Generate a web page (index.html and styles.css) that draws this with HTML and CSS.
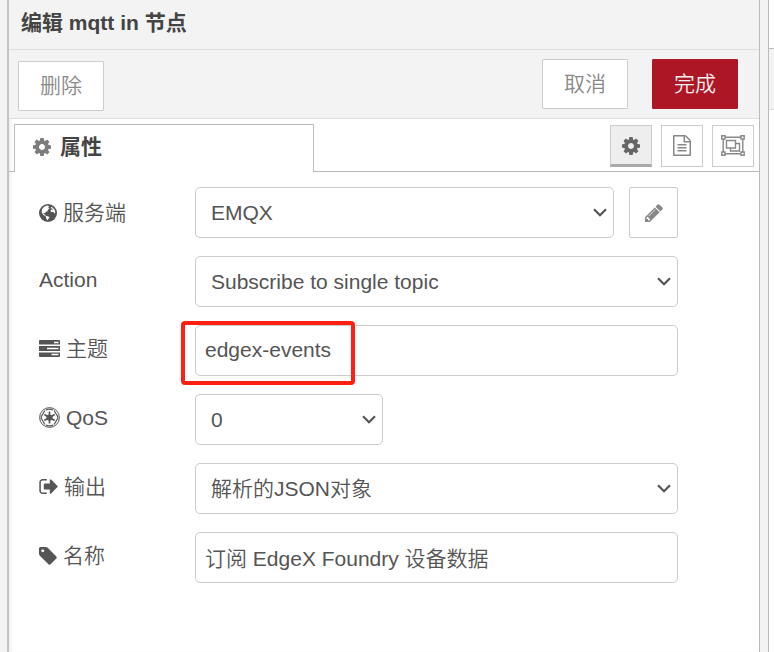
FILE: index.html
```html
<!DOCTYPE html>
<html lang="zh-CN">
<head>
<meta charset="utf-8">
<title>编辑 mqtt in 节点</title>
<link rel="stylesheet" href="styles.css">
</head>
<body>
<svg width="0" height="0" class="defs">
  <symbol id="cog" viewBox="128 128 1536 1536"><path d="M1152 896q0-106-75-181t-181-75-181 75-75 181 75 181 181 75 181-75 75-181zm512-109v222q0 12-8 23t-20 13l-185 28q-19 54-39 91 35 50 107 138 10 12 10 25t-9 23q-27 37-99 108t-94 71q-12 0-26-9l-138-108q-44 23-91 38-16 136-29 186-7 28-36 28h-222q-14 0-24.5-8.5t-11.5-21.5l-28-184q-49-16-90-37l-141 107q-10 9-25 9-14 0-25-11-126-114-165-168-7-10-7-23 0-12 8-23 15-21 51-66.5t54-70.5q-27-50-41-99l-183-27q-13-2-21-12.5t-8-23.5v-222q0-12 8-23t19-13l186-28q14-46 39-92-40-57-107-138-10-12-10-24 0-10 9-23 26-36 98.5-107.5t94.5-71.5q13 0 26 10l138 107q44-23 91-38 16-136 29-186 7-28 36-28h222q14 0 24.5 8.5t11.5 21.5l28 184q49 16 90 37l142-107q9-9 24-9 13 0 25 10 129 119 165 170 7 8 7 22 0 12-8 23-15 21-51 66.5t-54 70.5q26 50 41 98l183 28q13 2 21 12.5t8 23.5z"/></symbol>
  <symbol id="chevron" viewBox="0 0 14 9"><path d="M1 1.2L7 7.2L13 1.2" fill="none" stroke="currentColor" stroke-width="2.2"/></symbol>
</svg>
<div class="workspace">
  <div class="gutter-left"></div>
  <section class="tray">
    <header class="tray-header">编辑 mqtt in 节点</header>
    <div class="toolbar">
      <button class="btn delete">删除</button>
      <button class="btn cancel">取消</button>
      <button class="btn primary">完成</button>
    </div>
    <div class="tabs">
      <div class="tab"><svg class="icon18"><use href="#cog"/></svg><span>属性</span></div>
      <div class="tab-rest">
        <button class="tool active"><svg class="icon18"><use href="#cog"/></svg></button>
        <button class="tool"><svg width="18" height="21" viewBox="128 0 1536 1792"><path d="M1596 380q28 28 48 76t20 88v1152q0 40-28 68t-68 28h-1344q-40 0-68-28t-28-68v-1600q0-40 28-68t68-28h896q40 0 88 20t76 48zm-444-244v376h376q-10-29-22-41l-313-313q-12-12-41-22zm384 1528v-1024h-416q-40 0-68-28t-28-68v-416h-768v1536h1280zm-1024-864q0-14 9-23t23-9h704q14 0 23 9t9 23v64q0 14-9 23t-23 9h-704q-14 0-23-9t-9-23v-64zm736 224q14 0 23 9t9 23v64q0 14-9 23t-23 9h-704q-14 0-23-9t-9-23v-64q0-14 9-23t23-9h704zm0 256q14 0 23 9t9 23v64q0 14-9 23t-23 9h-704q-14 0-23-9t-9-23v-64q0-14 9-23t23-9h704z"/></svg></button>
        <button class="tool"><svg class="outline" width="24" height="21" viewBox="0 0 24 21"><path d="M4 2.2H20M4 18.8H20M2.2 4V17M21.8 4V17"/><path d="M.8.8H4V4H.8zM20 .8H23.2V4H20zM.8 17H4V20.2H.8zM20 17H23.2V20.2H20zM5.5 5.5H14.5V13H5.5zM14.5 8.5H18.5V16H9.5V13"/></svg></button>
      </div>
    </div>
    <form class="form">
      <div class="row">
        <label class="tall"><svg class="icon18" viewBox="0 0 18 18"><circle cx="9" cy="9" r="9"/><path fill="#fff" d="M6.2 2.3L8.5 1.6L10.2 2.5L9.2 3.8L10.4 4.7L8.9 5.8L8.5 7.2L6.7 8L5.9 9.3L4.5 8.8L4.7 10.2L6.1 10.5L6.5 11.8L8.8 12.2L10.6 13.2L9.4 14.7L8.8 16.5L7.2 14.6L6.7 12.3L4.4 11.1L2.7 8.6L3 5.3L4.8 3.1zM12.6 2.7L15.5 5.4L16.4 8.2L15.1 9.7L14.7 8L12.2 8.1L11.4 6.7L12.5 5.5L14 5.8L13.2 4.4L11.5 4.2z"/></svg><span>服务端</span></label>
        <div class="field select server"><span>EMQX</span><svg class="chevron"><use href="#chevron"/></svg></div>
        <button type="button" class="edit"><svg class="icon18" viewBox="128 128 1536 1536"><path d="M491 1536l91-91-235-235-91 91v107h128v128h107zm523-928q0-22-22-22-10 0-17 7l-542 542q-7 7-7 17 0 22 22 22 10 0 17-7l542-542q7-7 7-17zm-54-192l416 416-832 832h-416v-416zm683 96q0 53-37 90l-166 166-416-416 166-165q36-38 90-38 53 0 91 38l235 234q37 39 37 91z"/></svg></button>
      </div>
      <div class="row">
        <label><span>Action</span></label>
        <div class="field select"><span>Subscribe to single topic</span><svg class="chevron"><use href="#chevron"/></svg></div>
      </div>
      <div class="row">
        <label><svg width="21" height="18" viewBox="0 0 21 18"><path d="M0 1Q0 0 1 0H20Q21 0 21 1V4.5H0zM0 6H21V11H0zM0 12.5H21V16Q21 17 20 17H1Q0 17 0 16z"/><path d="M15 2.5H19.5M8 8.5H19.5M12.5 14.5H19.5" stroke="#fff" stroke-width="1.4"/></svg><span>主题</span></label>
        <div class="field topic"><span>edgex-events</span><i class="highlight"></i></div>
      </div>
      <div class="row">
        <label><svg width="21" height="21" viewBox="-10.5 -10.5 21 21"><circle r="9.9" fill="none" stroke="currentColor" stroke-width="1"/><path d="M-3.7-7.5Q0-9.2 3.7-7.5M-3.7 7.5Q0 9.2 3.7 7.5M4.6-7L8.3-.8V.8L4.6 7M-4.6-7L-8.3-.8V.8L-4.6 7" fill="none" stroke="currentColor" stroke-width="1.2"/><circle r="3.1"/><path d="M0-6V6M-5.2-3L5.2 3M-5.2 3L5.2-3" stroke="currentColor" stroke-width="1.7"/></svg><span>QoS</span></label>
        <div class="field select qos"><span>0</span><svg class="chevron"><use href="#chevron"/></svg></div>
      </div>
      <div class="row">
        <label><svg width="19" height="15" viewBox="64 256 1568 1280"><path d="M704 1440q0 4 1 20t.5 26.5-3 23.5-10 19.5-20.5 6.5h-320q-119 0-203.5-84.5t-84.5-203.5v-704q0-119 84.5-203.5t203.5-84.5h320q13 0 22.5 9.5t9.5 22.5q0 4 1 20t.5 26.5-3 23.5-10 19.5-20.5 6.5h-320q-66 0-113 47t-47 113v704q0 66 47 113t113 47h312l11.5 1 11.5 3 8 5.5 7 9 2 13.5zm928-544q0 26-19 45l-544 544q-19 19-45 19t-45-19-19-45v-288h-448q-26 0-45-19t-19-45v-384q0-26 19-45t45-19h448v-288q0-26 19-45t45-19 45 19l544 544q19 19 19 45z"/></svg><span>输出</span></label>
        <div class="field select"><span>解析的JSON对象</span><svg class="chevron"><use href="#chevron"/></svg></div>
      </div>
      <div class="row">
        <label><svg class="icon18" viewBox="128 128 1536 1536"><path d="M576 448q0-53-37.5-90.5t-90.5-37.5-90.5 37.5-37.5 90.5 37.5 90.5 90.5 37.5 90.5-37.5 37.5-90.5zm1067 576q0 53-37 90l-491 492q-39 37-91 37-53 0-90-37l-715-716q-38-37-64.5-101t-26.5-117v-416q0-52 38-90t90-38h416q53 0 117 26.5t102 64.5l715 714q37 39 37 91z"/></svg><span>名称</span></label>
        <div class="field name"><span>订阅 EdgeX Foundry 设备数据</span></div>
      </div>
    </form>
  </section>
  <div class="gutter-right"></div>
  <aside class="sidebar"><div class="sidebar-top"></div><div class="sidebar-bar"></div></aside>
</div>
</body>
</html>
```
FILE: styles.css
```css
* { box-sizing: border-box; }
body {
  margin: 0;
  height: 652px;
  overflow: hidden;
  background: #fff;
  color: #555;
  font: 350 21px/24px "Liberation Sans", "Noto Sans CJK SC", sans-serif;
}
.defs { position: absolute; }
svg { display: block; flex: none; fill: currentColor; }
svg.outline { fill: none; stroke: currentColor; stroke-width: 1.4; }
button { font: inherit; padding: 0; margin: 0; display: flex; align-items: center; justify-content: center; }
.icon18 { width: 18px; height: 18px; }
.workspace { display: flex; height: 652px; }
.gutter-left { width: 9px; background: #f3f3f3; border-right: 2px solid #c4c4c4; }
.tray { width: 751px; border-right: 1px solid #bbb; box-shadow: inset 4px 0 4px -3px #e8e8e8; }
.tray-header {
  height: 50px;
  padding: 11px 12px 0;
  background: #f3f3f3;
  border-bottom: 1px solid #ddd;
  color: #444;
  font-weight: 700;
}
.toolbar {
  display: flex;
  height: 69px;
  padding: 9px 21px 0 9px;
  gap: 24px;
  background: #f3f3f3;
  border-bottom: 1px solid #ddd;
}
.btn {
  width: 86px;
  height: 50px;
  background: #fff;
  border: 1px solid #ccc;
  border-radius: 1px;
  color: #888;
}
.btn.delete { margin: 2px auto 0 0; }
.btn.primary { background: #ad1625; border-color: #ad1625; color: #eee; }
.tabs { display: flex; height: 53px; padding-left: 5px; background: linear-gradient(#bbb, #bbb) 0 100% / 5px 1px no-repeat; }
.tab {
  display: flex;
  align-items: center;
  gap: 9px;
  width: 300px;
  margin-top: 5px;
  padding: 0 0 4px 18px;
  border: 1px solid #bbb;
  border-bottom: 0;
  color: #444;
  font-weight: 700;
}
.tab svg { color: #7c7c7c; }
.tab-rest {
  flex: 1;
  display: flex;
  justify-content: flex-end;
  gap: 9px;
  padding: 6px 5px 0 0;
  border-bottom: 1px solid #bbb;
}
.tool { width: 42px; height: 42px; padding-bottom: 1px; background: #fff; border: 1px solid #ccc; color: #888; }
.tool.active { padding: 1px 0 0; background: #eee; border-bottom: 3px solid #aaa; color: #666; }
.form { display: flex; flex-direction: column; gap: 18px; padding: 15px 0 0 30px; }
.row { display: flex; height: 51px; }
label { display: flex; align-items: center; gap: 6px; width: 156px; height: 47px; }
label.tall { height: 51px; }
.field {
  position: relative;
  display: flex;
  align-items: center;
  width: 483px;
  padding: 0 6px 0 9px;
  border: 1px solid #ccc;
  border-radius: 5px;
  background: #fff;
}
.select { justify-content: space-between; padding-left: 15px; }
.topic { padding-bottom: 2px; }
.name { padding-top: 2px; }
.server { width: 419px; }
.qos { width: 188px; }
.chevron { width: 14px; height: 9px; }
.edit {
  width: 49px;
  height: 51px;
  margin-left: 15px;
  background: #fff;
  border: 1px solid #ccc;
  border-radius: 2px;
  color: #888;
}
/* Marker frame lying over the topic field */
.highlight {
  position: absolute;
  left: -15px;
  top: -5px;
  width: 174px;
  height: 64px;
  border: 4px solid #ff2011;
  border-radius: 4px;
}
.gutter-right { width: 9px; background: #f3f3f3; border-right: 1px solid #bbb; }
.sidebar { flex: 1; }
.sidebar-top { height: 49px; border-bottom: 1px solid #bbb; }
.sidebar-bar { height: 61px; background: #f3f3f3; border-bottom: 1px solid #ddd; }
```
